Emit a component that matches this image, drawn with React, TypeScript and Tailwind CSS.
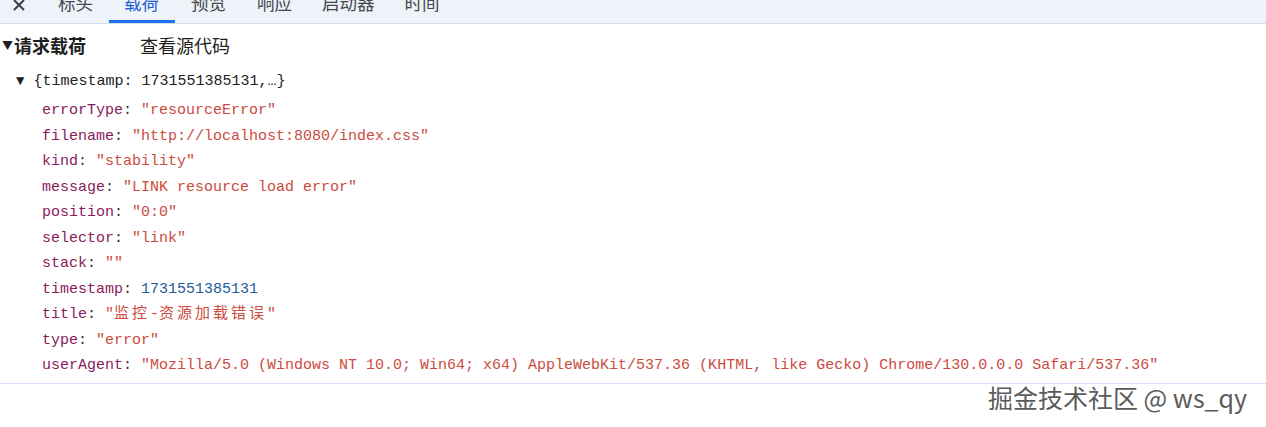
import React from "react";

const mono = { fontFamily: '"Liberation Mono", "Noto Sans CJK SC", monospace' };

const Cjk = ({ children }: { children: React.ReactNode }) => (
  <span className="tracking-[3px]">{children}</span>
);

type Row = { k: string; v: React.ReactNode; num?: boolean };

const rows: Row[] = [
  { k: "errorType", v: '"resourceError"' },
  { k: "filename", v: '"http://localhost:8080/index.css"' },
  { k: "kind", v: '"stability"' },
  { k: "message", v: '"LINK resource load error"' },
  { k: "position", v: '"0:0"' },
  { k: "selector", v: '"link"' },
  { k: "stack", v: '""' },
  { k: "timestamp", v: "1731551385131", num: true },
  {
    k: "title",
    v: (
      <>
        "<Cjk>监控</Cjk>-<Cjk>资源加载错误</Cjk>"
      </>
    ),
  },
  { k: "type", v: '"error"' },
  {
    k: "userAgent",
    v: '"Mozilla/5.0 (Windows NT 10.0; Win64; x64) AppleWebKit/537.36 (KHTML, like Gecko) Chrome/130.0.0.0 Safari/537.36"',
  },
];

export default function App() {
  const cn = { fontFamily: '"Noto Sans CJK SC", "Noto Sans", sans-serif' };
  return (
    <div className="w-[1266px] h-[427px] bg-white relative overflow-hidden" style={cn}>
      {/* tab bar */}
      <div className="h-[24px] bg-[#eef2f9] border-b border-[#d6dce8] flex items-start overflow-hidden relative">
        <div className="flex items-center -mt-[9px] h-[24px] text-[17.5px] leading-[24px] text-[#45474d]">
          <div className="w-[37px] flex justify-center">
            <svg width="14" height="14" viewBox="0 0 14 14" className="mt-[4px]">
              <path d="M2 2 L12 12 M12 2 L2 12" stroke="#3c3f45" strokeWidth="2" />
            </svg>
          </div>
          <div className="ml-[21px]">标头</div>
          <div className="ml-[31px] text-[#1a5fd0]">载荷</div>
          <div className="ml-[32px]">预览</div>
          <div className="ml-[31px]">响应</div>
          <div className="ml-[30px]">启动器</div>
          <div className="ml-[30px]">时间</div>
        </div>
        <div className="absolute left-[109px] top-[20px] w-[66px] h-[3px] bg-[#1a73e8]" />
      </div>

      {/* header */}
      <div className="flex items-center h-[42px] text-[18px] text-[#1f1f1f]">
        <span className="ml-[2px] text-[11px] mr-[1px]">▼</span>
        <span className="font-bold">请求载荷</span>
        <span className="ml-[54px]">查看源代码</span>
      </div>

      {/* tree */}
      <div className="text-[15px] leading-[25.5px]" style={mono}>
        <div className="flex items-center h-[24px] mt-[4px]">
          <span className="ml-[16px] text-[14px] text-[#222] mr-[9px]">▼</span>
          <span className="text-[#222]">{"{timestamp: 1731551385131,…}"}</span>
        </div>
        <div className="pl-[42px] mt-[4px]">
          {rows.map((r) => (
            <div key={r.k} className="whitespace-pre h-[25.5px]">
              <span className="text-[#8a1a5c]">{r.k}</span>
              <span className="text-[#333]">: </span>
              <span className={r.num ? "text-[#1f5a9e]" : "text-[#cc4a3e]"}>{r.v}</span>
            </div>
          ))}
        </div>
        <div className="mt-[4px] border-t border-[#dcdcf4]" />
      </div>

      {/* watermark */}
      <div
        className="absolute left-[988px] top-[381px] text-[25px] leading-[32px] text-[#5b5b5b]"
        style={{ fontFamily: '"Noto Sans CJK SC", "Noto Sans", sans-serif', textShadow: "1px 1px 1px #fff, -1px -1px 1px #fff" }}
      >
        掘金技术社区 @ ws_qy
      </div>
    </div>
  );
}
